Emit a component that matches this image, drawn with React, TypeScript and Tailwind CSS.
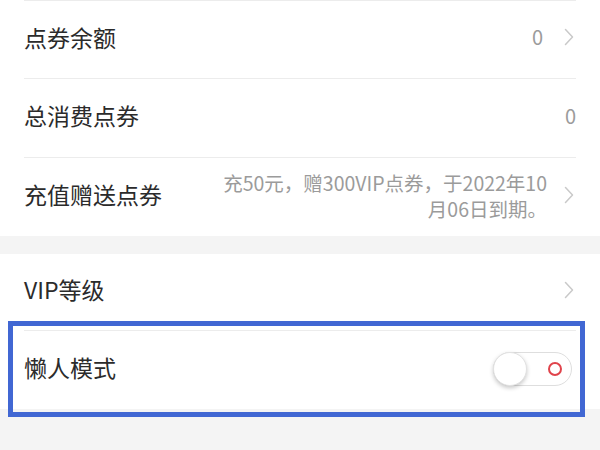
const font = { fontFamily: '"Noto Sans CJK SC", "Noto Sans", sans-serif' };

function Chevron() {
  return (
    <svg width="10" height="18" viewBox="0 0 10 18" fill="none" className="shrink-0 mr-[2px]">
      <path d="M1.5 1.5 L8.5 9 L1.5 16.5" stroke="#c9c9c9" strokeWidth="1.5" strokeLinecap="round" strokeLinejoin="round" />
    </svg>
  );
}

function Row({ title, children, h = 'h-[78px]' }: { title: string; children?: React.ReactNode; h?: string }) {
  return (
    <div className={`flex items-center justify-between ${h} px-6 pb-[5px]`}>
      <span className="text-[23px] text-[#2b2b2b]">{title}</span>
      <div className="flex items-center">{children}</div>
    </div>
  );
}

function Divider() {
  return <div className="mx-6 h-px bg-[#ececec]" />;
}

export default function App() {
  return (
    <div className="relative w-[600px] h-[450px] bg-[#f4f4f4] overflow-hidden" style={font}>
      <div className="bg-white">
        <Divider />
        <Row title="点券余额" h="h-[77px]">
          <span className="text-[20px] text-[#9b9b9b] mr-[21px]">0</span>
          <Chevron />
        </Row>
        <Divider />
        <Row title="总消费点券">
          <span className="text-[20px] text-[#9b9b9b]">0</span>
        </Row>
        <Divider />
        <Row title="充值赠送点券" h="h-[78px]">
          <div className="flex flex-col items-end text-[19.5px] leading-[26px] text-[#9b9b9b] mr-[17px] mt-[2px]">
            <span>充50元，赠300VIP点券，于2022年10</span>
            <span>月06日到期。</span>
          </div>
          <Chevron />
        </Row>
      </div>
      <div className="h-[18px]" />
      <div className="bg-white">
        <Row title="VIP等级" h="h-[76px]">
          <Chevron />
        </Row>
        <Divider />
        <Row title="懒人模式" h="h-[78px]">
          <div className="relative w-[79px] h-[34px] rounded-full border border-[#dedede] bg-white mr-[4px] mt-[2px]">
            <div className="absolute -left-px -top-px w-[34px] h-[34px] rounded-full bg-white border border-[#e2e2e2] shadow-[0_2px_4px_rgba(0,0,0,0.22)]" />
            <div className="absolute right-[9px] top-[9px] w-[14px] h-[14px] rounded-full border-2 border-[#e0434b]" />
          </div>
        </Row>
      </div>
      <div className="absolute left-[8px] top-[321px] w-[577px] h-[96px] border-[5px] border-[#4167d3]" />
    </div>
  );
}
